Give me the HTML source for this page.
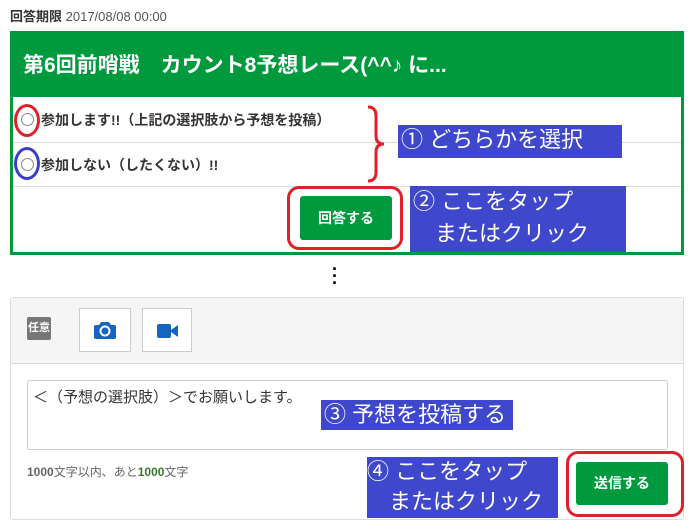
<!DOCTYPE html><html><head><meta charset="utf-8"><style>
body{margin:0;width:694px;height:532px;background:#fff;font-family:"Liberation Sans","Noto Sans CJK JP",sans-serif;position:relative;overflow:hidden}
.a{position:absolute}
.lab{background:#3f48cc;color:#fff;font-size:22px;line-height:30px;padding-left:3px;box-sizing:border-box}
</style></head><body>
<div class="a" style="left:10px;top:6px;font-size:13px;color:#555"><b style="color:#333">回答期限</b> 2017/08/08 00:00</div>
<div class="a" style="left:10px;top:31px;width:674px;height:224px;border:3px solid #009a3e;box-sizing:border-box"></div>
<div class="a" style="left:10px;top:31px;width:674px;height:66px;background:#009a3e;color:#fff;font-weight:bold;font-size:21px;line-height:70px;padding-left:13px;box-sizing:border-box">第6回前哨戦　カウント8予想レース(^^♪ に...</div>
<div class="a" style="left:13px;top:142px;width:668px;border-top:1px solid #ddd"></div>
<div class="a" style="left:13px;top:186px;width:668px;border-top:1px solid #ddd"></div>
<div class="a" style="left:21px;top:113px;width:11px;height:11px;border:1px solid #888;border-radius:50%"></div>
<div class="a" style="left:21px;top:158px;width:11px;height:11px;border:1px solid #888;border-radius:50%"></div>
<div class="a" style="left:41px;top:110px;font-size:14px;font-weight:bold;color:#333">参加します!!（上記の選択肢から予想を投稿）</div>
<div class="a" style="left:41px;top:155px;font-size:14px;font-weight:bold;color:#333">参加しない（したくない）!!</div>
<div class="a" style="left:14px;top:104px;width:20px;height:27px;border:3px solid #e0202a;border-radius:50%"></div>
<div class="a" style="left:14px;top:147px;width:20px;height:27px;border:3px solid #3a3fc8;border-radius:50%"></div>
<svg class="a" style="left:364px;top:104px" width="28" height="80"><path d="M4 3 Q12 3 12 12 L12 32 Q12 40 20 40 Q12 40 12 48 L12 68 Q12 77 4 77" fill="none" stroke="#e0202a" stroke-width="3"/></svg>
<div class="a lab" style="left:398px;top:125px;width:224px;height:33px">① どちらかを選択</div>
<div class="a" style="left:300px;top:196px;width:92px;height:44px;background:#009a3e;border-radius:3px;color:#fff;font-weight:bold;font-size:14px;line-height:44px;text-align:center">回答する</div>
<div class="a" style="left:287px;top:186px;width:116px;height:64px;border:3px solid #e0202a;border-radius:12px;box-sizing:border-box"></div>
<div class="a lab" style="left:410px;top:186px;width:216px;height:66px;line-height:32px">② ここをタップ<br>　またはクリック</div>
<div class="a" style="left:332px;top:266px;font-size:18px;line-height:7px;font-weight:bold">·<br>·<br>·</div>
<div class="a" style="left:10px;top:297px;width:674px;height:223px;border:1px solid #ddd;border-radius:3px;box-sizing:border-box"></div>
<div class="a" style="left:11px;top:298px;width:672px;height:65px;background:#f5f5f5;border-bottom:1px solid #ddd"></div>
<div class="a" style="left:27px;top:317px;width:24px;height:23px;background:#777;color:#fff;font-size:11px;font-weight:bold;line-height:23px;text-align:center;border-radius:2px">任意</div>
<div class="a" style="left:79px;top:308px;width:52px;height:44px;background:#fff;border:1px solid #ccc;box-sizing:border-box"></div>
<svg class="a" style="left:94px;top:320px" width="22" height="20"><path d="M7 2 h8 l2 3 h3 a2 2 0 0 1 2 2 v10 a2 2 0 0 1-2 2 h-18 a2 2 0 0 1-2-2 v-10 a2 2 0 0 1 2-2 h3z" fill="#1565c0"/><circle cx="11" cy="11" r="4.5" fill="none" stroke="#fff" stroke-width="2"/></svg>
<div class="a" style="left:142px;top:308px;width:50px;height:44px;background:#fff;border:1px solid #ccc;box-sizing:border-box"></div>
<svg class="a" style="left:157px;top:322px" width="22" height="18"><rect x="0" y="2" width="14" height="14" rx="2" fill="#1565c0"/><path d="M14 8 L21 3 V15 L14 10z" fill="#1565c0"/></svg>
<div class="a" style="left:27px;top:380px;width:641px;height:70px;border:1px solid #ccc;border-radius:3px;box-sizing:border-box;font-size:15px;padding:5px 5px;color:#333">＜（予想の選択肢）＞でお願いします。</div>
<div class="a lab" style="left:321px;top:400px;width:192px;height:30px">③ 予想を投稿する</div>
<div class="a" style="left:27px;top:463px;font-size:12px;color:#666"><b>1000</b>文字以内、あと<b style="color:#3a7a2a">1000</b>文字</div>
<div class="a lab" style="left:367px;top:457px;width:191px;height:61px;line-height:30px;padding-left:0">④ ここをタップ<br>　またはクリック</div>
<div class="a" style="left:576px;top:462px;width:92px;height:43px;background:#009a3e;border-radius:3px;color:#fff;font-weight:bold;font-size:14px;line-height:43px;text-align:center">送信する</div>
<div class="a" style="left:566px;top:451px;width:118px;height:66px;border:3px solid #e0202a;border-radius:12px;box-sizing:border-box"></div>
</body></html>
